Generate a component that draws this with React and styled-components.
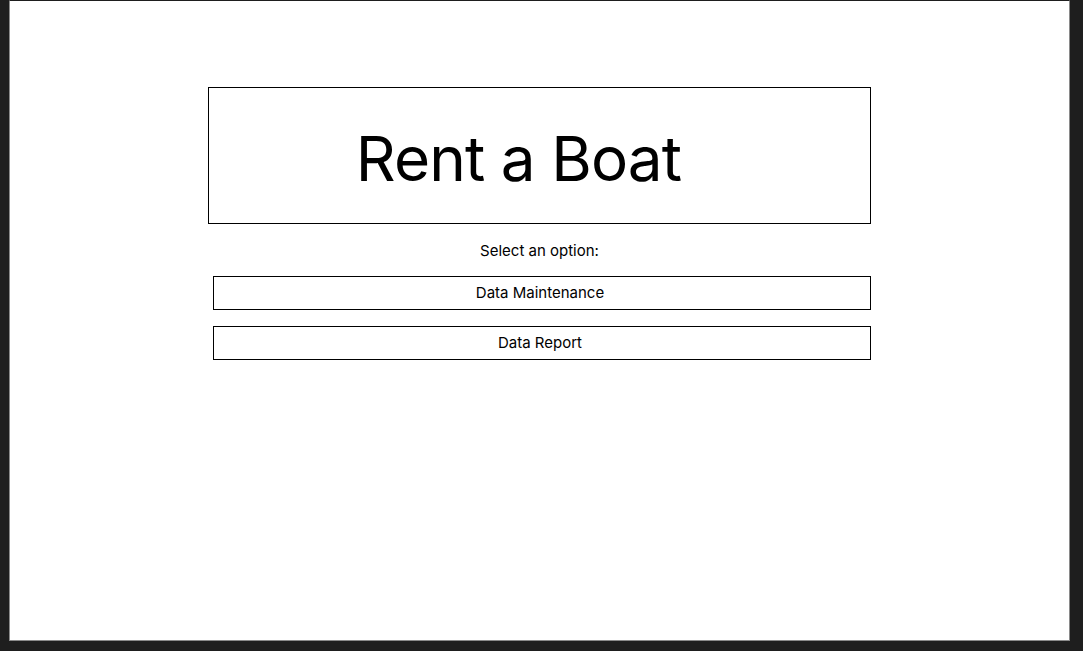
import styled, { createGlobalStyle } from "styled-components";

const GlobalStyle = createGlobalStyle`
  html, body {
    margin: 0;
    padding: 0;
    background: #1e1e1e;
  }
  body {
    font-family: Inter, "Noto Sans", sans-serif;
    color: #000;
  }
`;

const Canvas = styled.div`
  width: 1083px;
  height: 651px;
  padding-left: 9px;
  box-sizing: border-box;
`;

const Frame = styled.div`
  width: 1061px;
  height: 641px;
  box-sizing: border-box;
  background: #fff;
  border-top: 1px solid #1e1e1e;
  border-left: 1px solid #8a8a8a;
  border-right: 1px solid #8a8a8a;
  border-bottom: 1px solid #8a8a8a;
  padding: 86px 0 0 198px;
`;

const Content = styled.div`
  width: 663px;
  display: flex;
  flex-direction: column;
`;

const TitleBox = styled.div`
  height: 137px;
  box-sizing: border-box;
  border: 1px solid #000;
  display: flex;
  align-items: center;
  justify-content: center;
  padding: 6px 42px 0 0;
`;

const Title = styled.h1`
  margin: 0;
  font-size: 62px;
  font-weight: 400;
  letter-spacing: -0.9px;
`;

const Prompt = styled.p`
  margin: 17px 0 0;
  text-align: center;
  font-size: 15px;
  line-height: 20px;
`;

const Options = styled.div`
  margin-top: 15px;
  margin-left: 5px;
  display: flex;
  flex-direction: column;
  gap: 16px;
`;

const OptionButton = styled.button`
  height: 34px;
  box-sizing: border-box;
  border: 1px solid #000;
  background: #fff;
  font-family: Inter, "Noto Sans", sans-serif;
  font-size: 15px;
  color: #000;
  cursor: pointer;
  padding: 0 4px 2px 0;
`;

export default function App() {
  return (
    <>
      <GlobalStyle />
      <Canvas>
        <Frame>
          <Content>
            <TitleBox>
              <Title>Rent a Boat</Title>
            </TitleBox>
            <Prompt>Select an option:</Prompt>
            <Options>
              <OptionButton>Data Maintenance</OptionButton>
              <OptionButton>Data Report</OptionButton>
            </Options>
          </Content>
        </Frame>
      </Canvas>
    </>
  );
}
